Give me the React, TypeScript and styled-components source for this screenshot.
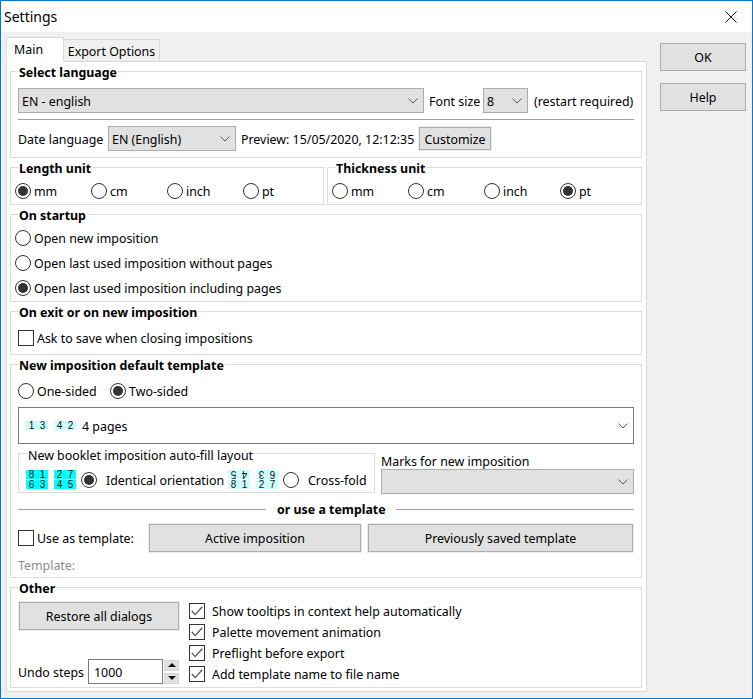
import React from 'react';
import styled, { createGlobalStyle } from 'styled-components';

const GlobalStyle = createGlobalStyle`
  html, body { margin: 0; padding: 0; background: #fff; }
  body {
    font-family: "Noto Sans", "Open Sans", sans-serif;
    font-size: 12.4px;
    line-height: 16px;
    color: #000;
    white-space: nowrap;
  }
`;

const Window = styled.div`
  width: 753px;
  height: 699px;
  box-sizing: border-box;
  border: 1px solid #0078d7;
  display: flex;
  flex-direction: column;
  overflow: hidden;
`;

const TitleBar = styled.div`
  height: 31px;
  flex: none;
  background: #fff;
  display: flex;
  align-items: center;
  justify-content: space-between;
  padding: 0 15px 0 3px;
  font-size: 14px;
`;

const Body = styled.div`
  flex: 1;
  background: #f0f0f0;
  display: flex;
  padding: 5px 6px 0 5px;
  gap: 13px;
`;

const Main = styled.div`
  width: 641px;
  display: flex;
  flex-direction: column;
`;

const Tabs = styled.div`
  display: flex;
  align-items: flex-end;
  height: 25px;
  margin-bottom: -1px;
`;

const Tab = styled.div<{ $active?: boolean }>`
  position: relative;
  box-sizing: border-box;
  display: flex;
  align-items: center;
  justify-content: ${({ $active }) => ($active ? 'flex-start' : 'center')};
  padding: ${({ $active }) => ($active ? '1px 0 0 7px' : '2px 0 0')};
  border: 1px solid #d9d9d9;
  border-left-width: ${({ $active }) => ($active ? '1px' : '0')};
  border-bottom-color: ${({ $active }) => ($active ? '#fff' : '#d9d9d9')};
  background: ${({ $active }) => ($active ? '#fff' : '#f0f0f0')};
  width: ${({ $active }) => ($active ? '58px' : '96px')};
  height: ${({ $active }) => ($active ? '25px' : '23px')};
  z-index: ${({ $active }) => ($active ? 1 : 0)};
`;

const Panel = styled.div`
  box-sizing: border-box;
  width: 641px;
  height: 631px;
  background: #fff;
  border: 1px solid #d9d9d9;
  padding: 9px 4px 0 3px;
  display: flex;
  flex-direction: column;
  gap: 9px;
`;

const Side = styled.div`
  display: flex;
  flex-direction: column;
  gap: 12px;
  padding-top: 6px;
`;

const Button = styled.div<{ $w?: number; $h?: number }>`
  box-sizing: border-box;
  flex: none;
  width: ${({ $w }) => ($w ? `${$w}px` : '100%')};
  height: ${({ $h }) => $h || 28}px;
  background: #e1e1e1;
  border: 1px solid #adadad;
  box-shadow: 0 0 0 1px #ececec;
  padding-top: 2px;
  display: flex;
  align-items: center;
  justify-content: center;
`;

const SideButton = styled(Button)`
  width: 86px;
  box-shadow: none;
`;

const Group = styled.div<{ $h: number; $w?: number; $grow?: boolean }>`
  box-sizing: border-box;
  height: ${({ $h }) => $h}px;
  width: ${({ $w }) => ($w ? `${$w}px` : 'auto')};
  flex: ${({ $grow }) => ($grow ? '1 1 0' : 'none')};
  min-width: 0;
  border: 1px solid #dcdcdc;
  padding: 0 7px;
  display: flex;
  flex-direction: column;
`;

const Label = styled.span`
  display: block;
  flex: none;
  box-sizing: border-box;
  height: 16px;
  padding-top: 2px;
  line-height: 14px;
`;

const Legend = styled(Label)`
  font-weight: 700;
  margin: -8px 0 0 0;
  padding-left: 1px;
  padding-right: 1px;
  width: fit-content;
  background: #fff;
`;

const Row = styled.div<{ $gap?: number; $top?: number }>`
  display: flex;
  align-items: center;
  flex: none;
  gap: ${({ $gap }) => $gap || 0}px;
  margin-top: ${({ $top }) => $top || 0}px;
`;

const TopRow = styled(Row)`
  align-items: flex-start;
`;

const FieldLabel = styled(Label)<{ $w: number; $left?: number }>`
  width: ${({ $w }) => $w}px;
  padding-left: ${({ $left }) => $left || 0}px;
`;

const UnitRow = styled.div`
  display: grid;
  grid-template-columns: repeat(4, 76px);
  margin: 7px 0 0 -3px;
`;

const SidedRow = styled.div`
  display: grid;
  grid-template-columns: repeat(2, 92px);
  margin-top: 10px;
`;

const Combo = styled.div<{ $w?: number }>`
  box-sizing: border-box;
  flex: none;
  width: ${({ $w }) => ($w ? `${$w}px` : '100%')};
  height: 25px;
  background: #e1e1e1;
  border: 1px solid #adadad;
  display: flex;
  align-items: center;
  justify-content: space-between;
  padding: 0 5px 0 3px;
`;

const TemplateCombo = styled.div`
  box-sizing: border-box;
  width: 100%;
  height: 37px;
  background: #fff;
  border: 1px solid #7a7a7a;
  display: flex;
  align-items: center;
  justify-content: space-between;
  padding: 0 5px 0 7px;
`;

const Divider = styled.div<{ $w?: number }>`
  height: 1px;
  background: #a0a0a0;
  flex: ${({ $w }) => ($w ? `none` : 1)};
  width: ${({ $w }) => ($w ? `${$w}px` : 'auto')};
`;

const RadioWrap = styled.div`
  display: flex;
  align-items: center;
  gap: 3px;
`;

const RadioCircle = styled.span<{ $on?: boolean }>`
  box-sizing: border-box;
  flex: none;
  width: 16px;
  height: 16px;
  border: 1px solid #333;
  border-radius: 50%;
  background: #fff;
  display: flex;
  align-items: center;
  justify-content: center;
  &::after {
    content: '';
    display: ${({ $on }) => ($on ? 'block' : 'none')};
    width: 10px;
    height: 10px;
    border-radius: 50%;
    background: #333;
  }
`;

const CheckWrap = styled.div<{ $gap: number }>`
  display: flex;
  align-items: center;
  gap: ${({ $gap }) => $gap}px;
`;

const CheckSquare = styled.span`
  box-sizing: border-box;
  flex: none;
  width: 16px;
  height: 16px;
  border: 1px solid #333;
  background: #fff;
  display: flex;
  align-items: center;
  justify-content: center;
`;

const StartupRows = styled.div`
  display: flex;
  flex-direction: column;
  gap: 9px;
  margin: 7px 0 0 -3px;
`;

const BoldCenter = styled(Label)`
  font-weight: 700;
  padding-left: 11px;
  padding-right: 10px;
`;

const Booklet = styled.div`
  box-sizing: border-box;
  flex: none;
  width: 357px;
  height: 40px;
  border: 1px solid #dcdcdc;
  padding: 0 0 0 7px;
`;

const BookletLegend = styled(Label)`
  margin: -7px 0 0 1px;
  padding-left: 1px;
  padding-right: 1px;
  width: fit-content;
  background: #fff;
`;

const TilePair = styled.div`
  display: flex;
  flex: none;
  gap: 6px;
`;

const Tiles = styled.div`
  display: grid;
  grid-template-columns: 11px 11px;
  grid-auto-rows: 9px;
  row-gap: 1px;
`;

const Tile = styled.span<{ $bg: string; $flip?: boolean }>`
  background: ${({ $bg }) => $bg};
  font-family: "Liberation Sans", sans-serif;
  font-size: 10px;
  line-height: 9px;
  text-align: center;
  color: #111;
  transform: ${({ $flip }) => ($flip ? 'rotate(180deg)' : 'none')};
`;

const BookletOption = styled(Row)<{ $right?: number }>`
  margin: 0 ${({ $right }) => $right || 0}px 0 5px;
  gap: 9px;
`;

const MarksCol = styled.div`
  flex: 1;
  display: flex;
  flex-direction: column;
`;

const UseButtons = styled.div`
  margin-left: auto;
  display: flex;
  gap: 7px;
  padding-right: 1px;
`;

const Muted = styled(Label)`
  color: #8c8c8c;
  margin-top: 5px;
`;

const OtherBody = styled.div`
  display: flex;
  gap: 10px;
  margin-top: 6px;
`;

const OtherLeft = styled.div`
  width: 161px;
  height: 82px;
  display: flex;
  flex-direction: column;
  justify-content: space-between;
`;

const RestoreButton = styled(Button)`
  margin-left: 1px;
`;

const OtherChecks = styled.div`
  display: flex;
  flex-direction: column;
  gap: 5px;
  padding-top: 1px;
`;

const UndoField = styled.div`
  box-sizing: border-box;
  flex: none;
  width: 75px;
  height: 25px;
  border: 1px solid #7a7a7a;
  background: #fff;
  display: flex;
  align-items: center;
  padding-left: 5px;
`;

const Spin = styled.div`
  display: flex;
  flex-direction: column;
  gap: 2px;
  margin-left: 1px;
`;

const SpinBtn = styled.div`
  box-sizing: border-box;
  width: 15px;
  height: 11px;
  background: #e1e1e1;
  border: 1px solid #d6d6d6;
  display: flex;
  align-items: center;
  justify-content: center;
`;

const Chevron = () => (
  <svg width="10" height="6" viewBox="0 0 10 6">
    <polyline points="0.5,0.6 5,5 9.5,0.6" fill="none" stroke="#555" strokeWidth="1" />
  </svg>
);

const Tick = () => (
  <svg width="12" height="10" viewBox="0 0 12 10">
    <polyline points="0.8,5 4.2,8.6 11.2,0.8" fill="none" stroke="#555" strokeWidth="1.3" />
  </svg>
);

const Radio = ({ on, label }: { on?: boolean; label?: string }) => (
  <RadioWrap>
    <RadioCircle $on={on} />
    {label && <Label>{label}</Label>}
  </RadioWrap>
);

const Check = ({ on, label, gap = 3 }: { on?: boolean; label: string; gap?: number }) => (
  <CheckWrap $gap={gap}>
    <CheckSquare>{on && <Tick />}</CheckSquare>
    <Label>{label}</Label>
  </CheckWrap>
);

const Units = ({ selected }: { selected: string }) => (
  <UnitRow>
    {['mm', 'cm', 'inch', 'pt'].map(u => (
      <Radio key={u} label={u} on={u === selected} />
    ))}
  </UnitRow>
);

const PageGrid = ({ rows, bg, flipTop }: { rows: string[][]; bg: string; flipTop?: boolean }) => (
  <TilePair>
    {[0, 1].map(pair => (
      <Tiles key={pair}>
        {rows.map((row, r) =>
          row.slice(pair * 2, pair * 2 + 2).map((n, i) => (
            <Tile key={`${r}-${i}`} $bg={bg} $flip={flipTop && r === 0}>{n}</Tile>
          ))
        )}
      </Tiles>
    ))}
  </TilePair>
);

export default function App() {
  return (
    <>
      <GlobalStyle />
      <Window>
        <TitleBar>
          <span>Settings</span>
          <svg width="12" height="12" viewBox="0 0 12 12">
            <path d="M0.5 0.5L11.5 11.5M11.5 0.5L0.5 11.5" stroke="#111" strokeWidth="1" />
          </svg>
        </TitleBar>
        <Body>
          <Main>
            <Tabs>
              <Tab $active>Main</Tab>
              <Tab>Export Options</Tab>
            </Tabs>
            <Panel>
              <Group $h={87}>
                <Legend>Select language</Legend>
                <Row $top={8}>
                  <Combo $w={406}><Label>EN - english</Label><Chevron /></Combo>
                  <FieldLabel $w={59} $left={5}>Font size</FieldLabel>
                  <Combo $w={45}><Label>8</Label><Chevron /></Combo>
                  <FieldLabel $w={106} $left={6}>(restart required)</FieldLabel>
                </Row>
                <Row $top={6}><Divider /></Row>
                <Row $top={6}>
                  <FieldLabel $w={90}>Date language</FieldLabel>
                  <Combo $w={128}><Label>EN (English)</Label><Chevron /></Combo>
                  <FieldLabel $w={183} $left={5}>Preview: 15/05/2020, 12:12:35</FieldLabel>
                  <Button $w={72} $h={23}>Customize</Button>
                </Row>
              </Group>
              <Row $gap={3}>
                <Group $h={38} $w={314}>
                  <Legend>Length unit</Legend>
                  <Units selected="mm" />
                </Group>
                <Group $h={38} $grow>
                  <Legend>Thickness unit</Legend>
                  <Units selected="pt" />
                </Group>
              </Row>
              <Group $h={88}>
                <Legend>On startup</Legend>
                <StartupRows>
                  <Radio label="Open new imposition" />
                  <Radio label="Open last used imposition without pages" />
                  <Radio on label="Open last used imposition including pages" />
                </StartupRows>
              </Group>
              <Group $h={44}>
                <Legend>On exit or on new imposition</Legend>
                <Row $top={10}>
                  <Check label="Ask to save when closing impositions" />
                </Row>
              </Group>
              <Group $h={214}>
                <Legend>New imposition default template</Legend>
                <SidedRow>
                  <Radio label="One-sided" />
                  <Radio on label="Two-sided" />
                </SidedRow>
                <Row $top={8}>
                  <TemplateCombo>
                    <Row $gap={6}>
                      <PageGrid rows={[['1', '3', '4', '2']]} bg="#ccffff" />
                      <Label>4 pages</Label>
                    </Row>
                    <Chevron />
                  </TemplateCombo>
                </Row>
                <TopRow $gap={6} $top={9}>
                  <Booklet>
                    <BookletLegend>New booklet imposition auto-fill layout</BookletLegend>
                    <Row $top={7}>
                      <PageGrid rows={[['8', '1', '2', '7'], ['6', '3', '4', '5']]} bg="#00ffff" />
                      <BookletOption $right={7}>
                        <Radio on />
                        <FieldLabel $w={115}>Identical orientation</FieldLabel>
                      </BookletOption>
                      <PageGrid rows={[['5', '4', '3', '6'], ['8', '1', '2', '7']]} bg="#ccffff" flipTop />
                      <BookletOption>
                        <Radio />
                        <Label>Cross-fold</Label>
                      </BookletOption>
                    </Row>
                  </Booklet>
                  <MarksCol>
                    <Label>Marks for new imposition</Label>
                    <Combo><span /><Chevron /></Combo>
                  </MarksCol>
                </TopRow>
                <Row $top={7}>
                  <Divider $w={248} />
                  <BoldCenter>or use a template</BoldCenter>
                  <Divider />
                </Row>
                <Row $top={7}>
                  <Check label="Use as template:" />
                  <UseButtons>
                    <Button $w={212}>Active imposition</Button>
                    <Button $w={265}>Previously saved template</Button>
                  </UseButtons>
                </Row>
                <Muted>Template:</Muted>
              </Group>
              <Group $h={101}>
                <Legend>Other</Legend>
                <OtherBody>
                  <OtherLeft>
                    <RestoreButton $w={160}>Restore all dialogs</RestoreButton>
                    <Row>
                      <FieldLabel $w={70}>Undo steps</FieldLabel>
                      <UndoField><Label>1000</Label></UndoField>
                      <Spin>
                        <SpinBtn>
                          <svg width="8" height="4" viewBox="0 0 8 4"><path d="M4 0L8 4H0Z" fill="#111" /></svg>
                        </SpinBtn>
                        <SpinBtn>
                          <svg width="8" height="4" viewBox="0 0 8 4"><path d="M0 0H8L4 4Z" fill="#111" /></svg>
                        </SpinBtn>
                      </Spin>
                    </Row>
                  </OtherLeft>
                  <OtherChecks>
                    <Check on gap={7} label="Show tooltips in context help automatically" />
                    <Check on gap={7} label="Palette movement animation" />
                    <Check on gap={7} label="Preflight before export" />
                    <Check on gap={7} label="Add template name to file name" />
                  </OtherChecks>
                </OtherBody>
              </Group>
            </Panel>
          </Main>
          <Side>
            <SideButton>OK</SideButton>
            <SideButton>Help</SideButton>
          </Side>
        </Body>
      </Window>
    </>
  );
}
